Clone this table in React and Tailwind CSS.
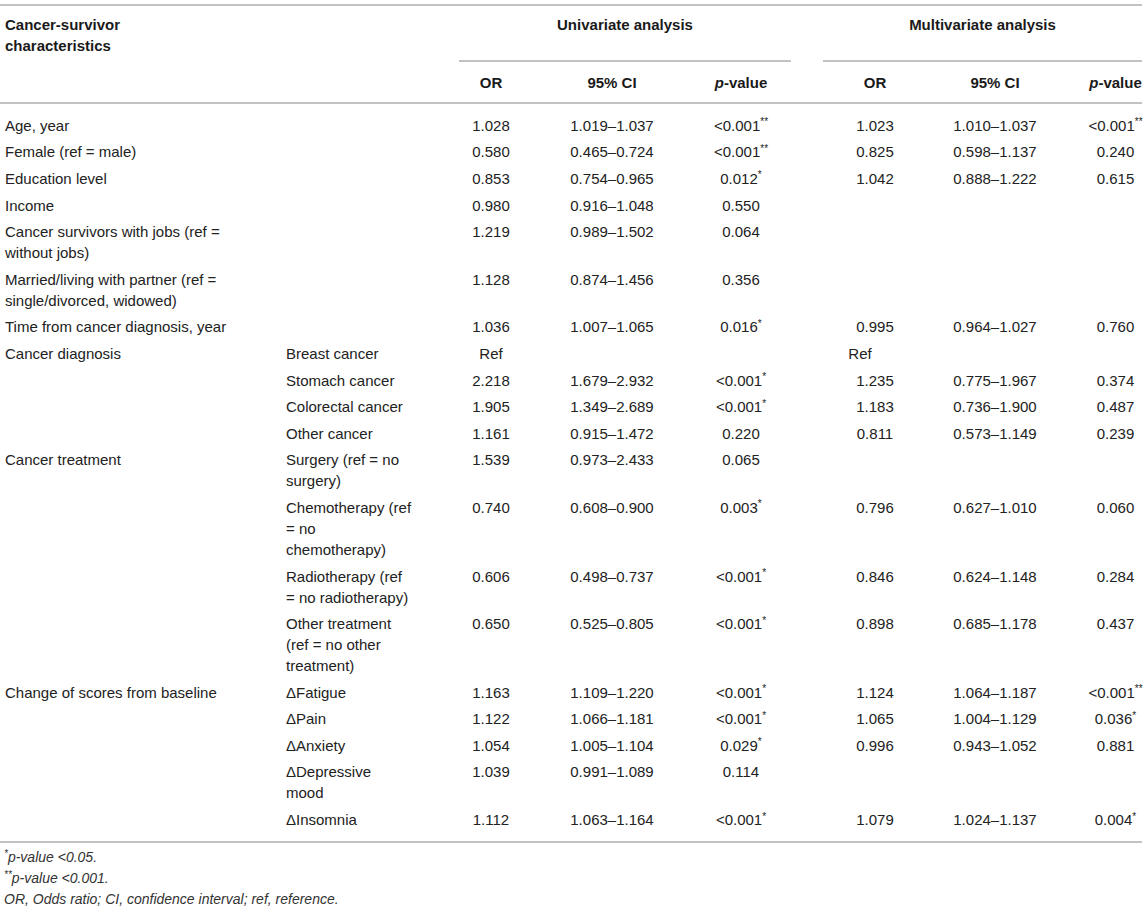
import React from "react";

const GRID =
  "grid grid-cols-[281px_178px_64px_178px_90px_32px_104px_136px_79px]";

const rows = [
  { c1: "Age, year", u: ["1.028", "1.019–1.037", ["<0.001", "**"]], m: ["1.023", "1.010–1.037", ["<0.001", "**"]] },
  { c1: "Female (ref = male)", u: ["0.580", "0.465–0.724", ["<0.001", "**"]], m: ["0.825", "0.598–1.137", "0.240"] },
  { c1: "Education level", u: ["0.853", "0.754–0.965", ["0.012", "*"]], m: ["1.042", "0.888–1.222", "0.615"] },
  { c1: "Income", u: ["0.980", "0.916–1.048", "0.550"] },
  { c1: ["Cancer survivors with jobs (ref =", "without jobs)"], u: ["1.219", "0.989–1.502", "0.064"] },
  { c1: ["Married/living with partner (ref =", "single/divorced, widowed)"], u: ["1.128", "0.874–1.456", "0.356"] },
  { c1: "Time from cancer diagnosis, year", u: ["1.036", "1.007–1.065", ["0.016", "*"]], m: ["0.995", "0.964–1.027", "0.760"] },
  { c1: "Cancer diagnosis", c2: "Breast cancer", u: ["Ref", "", ""], m: ["Ref", "", ""], mref: true },
  { c2: "Stomach cancer", u: ["2.218", "1.679–2.932", ["<0.001", "*"]], m: ["1.235", "0.775–1.967", "0.374"] },
  { c2: "Colorectal cancer", u: ["1.905", "1.349–2.689", ["<0.001", "*"]], m: ["1.183", "0.736–1.900", "0.487"] },
  { c2: "Other cancer", u: ["1.161", "0.915–1.472", "0.220"], m: ["0.811", "0.573–1.149", "0.239"] },
  { c1: "Cancer treatment", c2: ["Surgery (ref = no", "surgery)"], u: ["1.539", "0.973–2.433", "0.065"] },
  { c2: ["Chemotherapy (ref", "= no", "chemotherapy)"], u: ["0.740", "0.608–0.900", ["0.003", "*"]], m: ["0.796", "0.627–1.010", "0.060"] },
  { c2: ["Radiotherapy (ref", "= no radiotherapy)"], u: ["0.606", "0.498–0.737", ["<0.001", "*"]], m: ["0.846", "0.624–1.148", "0.284"] },
  { c2: ["Other treatment", "(ref = no other", "treatment)"], u: ["0.650", "0.525–0.805", ["<0.001", "*"]], m: ["0.898", "0.685–1.178", "0.437"] },
  { c1: "Change of scores from baseline", c2: "ΔFatigue", u: ["1.163", "1.109–1.220", ["<0.001", "*"]], m: ["1.124", "1.064–1.187", ["<0.001", "**"]] },
  { c2: "ΔPain", u: ["1.122", "1.066–1.181", ["<0.001", "*"]], m: ["1.065", "1.004–1.129", ["0.036", "*"]] },
  { c2: "ΔAnxiety", u: ["1.054", "1.005–1.104", ["0.029", "*"]], m: ["0.996", "0.943–1.052", "0.881"] },
  { c2: ["ΔDepressive", "mood"], u: ["1.039", "0.991–1.089", "0.114"] },
  { c2: "ΔInsomnia", u: ["1.112", "1.063–1.164", ["<0.001", "*"]], m: ["1.079", "1.024–1.137", ["0.004", "*"]] },
];

function Lines({ v }) {
  if (!v) return null;
  if (Array.isArray(v))
    return v.map((s, i) => (
      <React.Fragment key={i}>
        {i > 0 && <br />}
        {s}
      </React.Fragment>
    ));
  return v;
}

function Val({ v }) {
  if (!v) return null;
  if (Array.isArray(v))
    return (
      <>
        {v[0]}
        <sup className="text-[10px] top-[-0.55em]">{v[1]}</sup>
      </>
    );
  return v;
}

function Row({ r, first, last }) {
  const u = r.u || ["", "", ""];
  const m = r.m || ["", "", ""];
  return (
    <div
      className={`${GRID} leading-[21px] pt-[2.8px] pb-[2.8px] ${first ? "pt-[10.8px]" : ""} ${last ? "pb-[10.8px]" : ""}`}
    >
      <div className="pl-[5px] whitespace-nowrap">
        <Lines v={r.c1} />
      </div>
      <div className="pl-[5px] whitespace-nowrap">
        <Lines v={r.c2} />
      </div>
      <div className="text-center whitespace-nowrap">
        <Val v={u[0]} />
      </div>
      <div className="text-center whitespace-nowrap">
        <Val v={u[1]} />
      </div>
      <div className="text-center whitespace-nowrap pr-[10px]">
        <Val v={u[2]} />
      </div>
      <div />
      <div className={`text-center whitespace-nowrap ${r.mref ? "pr-[30px]" : ""}`}>
        <Val v={m[0]} />
      </div>
      <div className="text-center whitespace-nowrap">
        <Val v={m[1]} />
      </div>
      <div className="flex justify-center whitespace-nowrap pl-[26px]">
        <span>
          <Val v={m[2]} />
        </span>
      </div>
    </div>
  );
}

export default function App() {
  return (
    <div
      className="bg-white w-[1146px] h-[909px] overflow-hidden text-[15px] text-[#222]"
      style={{ fontFamily: '"Liberation Sans", Arial, sans-serif' }}
    >
      <div className="pt-[4px] w-[1142px]">
        {/* header */}
        <div className={`${GRID} border-t-2 border-b-2 border-[#c2c2c2] font-bold text-[#1a1a1a] leading-[21px]`}>
          <div className="row-span-2 col-span-2 pl-[5px] pt-[8px]">
            Cancer-survivor
            <br />
            characteristics
          </div>
          <div className="col-start-3 col-span-3 h-[56px] pt-[8px] text-center border-b-2 border-[#c2c2c2]">
            Univariate analysis
          </div>
          <div className="col-start-7 col-span-3 h-[56px] pt-[8px] text-center border-b-2 border-[#c2c2c2]">
            Multivariate analysis
          </div>
          <div className="col-start-3 py-[9.5px] text-center">OR</div>
          <div className="py-[9.5px] text-center">95% CI</div>
          <div className="py-[9.5px] text-center pr-[10px]">
            <i>p</i>-value
          </div>
          <div className="col-start-7 py-[9.5px] text-center">OR</div>
          <div className="py-[9.5px] text-center">95% CI</div>
          <div className="py-[9.5px] flex justify-center pl-[26px]">
            <span>
              <i>p</i>-value
            </span>
          </div>
        </div>
        {/* body */}
        <div className="border-b-2 border-[#c2c2c2]">
          {rows.map((r, i) => (
            <Row key={i} r={r} first={i === 0} last={i === rows.length - 1} />
          ))}
        </div>
        {/* footnotes */}
        <div className="pt-[4px] pl-[4px] italic text-[14px] leading-[21px] text-[#333]">
          <div>
            <sup className="text-[10px]">*</sup>p-value &lt;0.05.
          </div>
          <div>
            <sup className="text-[10px]">**</sup>p-value &lt;0.001.
          </div>
          <div>OR, Odds ratio; CI, confidence interval; ref, reference.</div>
        </div>
      </div>
    </div>
  );
}
